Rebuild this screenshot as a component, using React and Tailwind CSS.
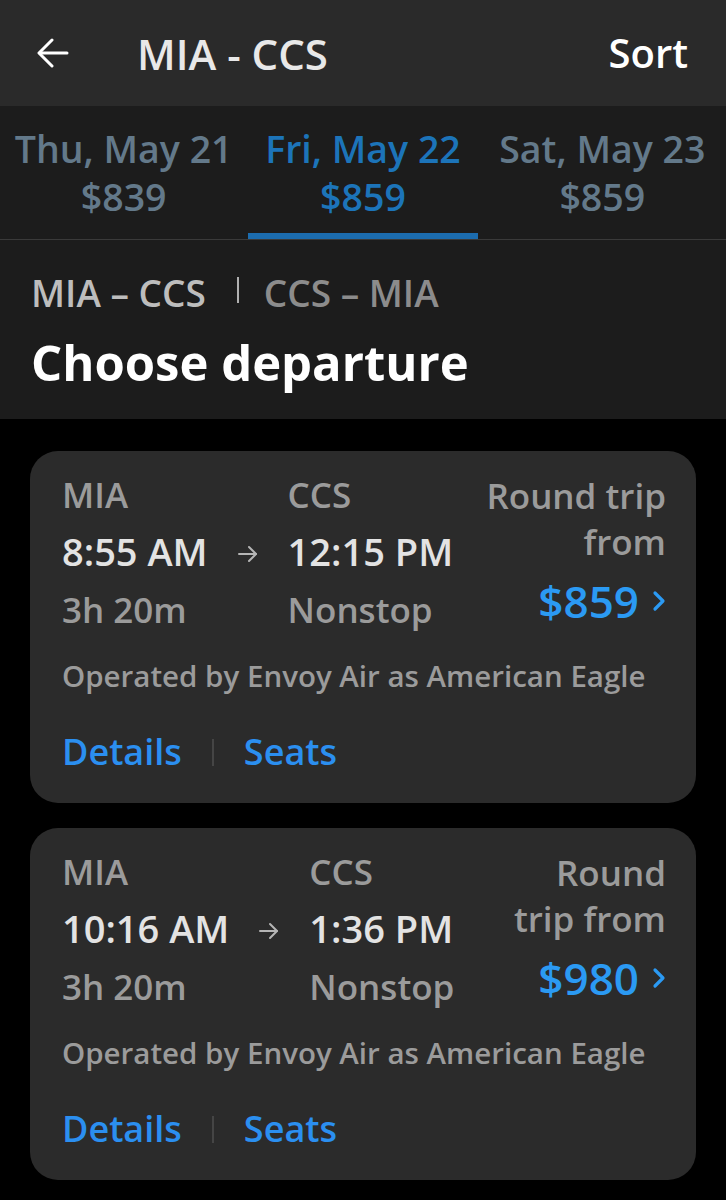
import React from "react"

const font = { fontFamily: '"Open Sans", "Noto Sans", sans-serif' }

const dates = [
  { day: "Thu, May 21", price: "$839" },
  { day: "Fri, May 22", price: "$859", active: true },
  { day: "Sat, May 23", price: "$859" },
]

const flights = [
  {
    from: "MIA",
    to: "CCS",
    dep: "8:55 AM",
    arr: "12:15 PM",
    duration: "3h 20m",
    label: ["Round trip", "from"],
    price: "$859",
  },
  {
    from: "MIA",
    to: "CCS",
    dep: "10:16 AM",
    arr: "1:36 PM",
    duration: "3h 20m",
    label: ["Round", "trip from"],
    price: "$980",
  },
]

function BackArrow() {
  return (
    <svg width="32" height="32" viewBox="0 0 32 32" fill="none" stroke="#ffffff" strokeWidth="3" strokeLinecap="round" strokeLinejoin="round">
      <path d="M30 16H3" />
      <path d="M15 3L2 16l13 13" />
    </svg>
  )
}

function SmallArrow() {
  return (
    <svg width="20" height="18" viewBox="0 0 20 18" fill="none" stroke="#b5b5b5" strokeWidth="2" strokeLinecap="round" strokeLinejoin="round">
      <path d="M1 9h17" />
      <path d="M11 2l7 7-7 7" />
    </svg>
  )
}

function Chevron() {
  return (
    <svg width="15" height="22" viewBox="0 0 15 22" fill="none" stroke="#2b9af3" strokeWidth="3.2" strokeLinecap="round" strokeLinejoin="round">
      <path d="M4 3l8 8-8 8" />
    </svg>
  )
}

function FlightCard({ f }) {
  return (
    <div className="rounded-[28px] bg-[#2b2b2b] pl-[32px] pr-[30px] pt-[22px] pb-[29px]">
      <div className="flex">
        <div className="flex flex-col">
          <span className="text-[35px] leading-[44px] font-semibold text-[#9b9b9b]">{f.from}</span>
          <span className="text-[38px] leading-[68px] font-semibold text-[#e3e3e3]">{f.dep}</span>
          <span className="text-[35px] leading-[50px] font-semibold text-[#9b9b9b]">{f.duration}</span>
        </div>
        <div className="flex flex-col px-[30px]">
          <div className="h-[44px]" />
          <div className="h-[68px] flex items-center pt-[6px]">
            <SmallArrow />
          </div>
        </div>
        <div className="flex flex-col">
          <span className="text-[35px] leading-[44px] font-semibold text-[#9b9b9b]">{f.to}</span>
          <span className="text-[38px] leading-[68px] font-semibold text-[#e3e3e3]">{f.arr}</span>
          <span className="text-[35px] leading-[50px] font-semibold text-[#9b9b9b]">Nonstop</span>
        </div>
        <div className="flex-1 flex flex-col items-end text-right">
          <span className="text-[35px] leading-[46px] font-semibold text-[#9b9b9b] whitespace-nowrap">{f.label[0]}</span>
          <span className="text-[35px] leading-[46px] font-semibold text-[#9b9b9b] whitespace-nowrap">{f.label[1]}</span>
          <div className="flex items-center gap-[12px] h-[72px]">
            <span className="text-[44px] leading-[72px] font-semibold text-[#2b9af3]">{f.price}</span>
            <Chevron />
          </div>
        </div>
      </div>
      <div className="mt-[19px] text-[29.5px] leading-[40px] font-semibold text-[#9b9b9b] whitespace-nowrap">
        Operated by Envoy Air as American Eagle
      </div>
      <div className="mt-[34px] flex items-center h-[44px]">
        <span className="text-[36px] leading-[44px] font-semibold text-[#2b8ff0]">Details</span>
        <div className="mx-[30px] w-[2px] h-[27px] bg-[#454545]" />
        <span className="text-[36px] leading-[44px] font-semibold text-[#2b8ff0]">Seats</span>
      </div>
    </div>
  )
}

export default function App() {
  return (
    <div className="w-[726px] min-h-[1200px] bg-black" style={font}>
      <div className="h-[106px] bg-[#2a2a2a] flex items-center pl-[37px] pr-[38px]">
        <BackArrow />
        <span className="ml-[68px] text-[42px] font-semibold text-[#e8e8e8]">MIA - CCS</span>
        <span className="ml-auto text-[40px] font-semibold text-white">Sort</span>
      </div>

      <div className="bg-[#1c1c1c] border-b border-[#3a3a3a] flex px-[4px]">
        {dates.map((d) => (
          <div key={d.day} className="flex-1 flex flex-col items-center pt-[19px]">
            <span className={"text-[37.5px] leading-[48px] font-semibold whitespace-nowrap " + (d.active ? "text-[#1c74b9]" : "text-[#63798a]")}>
              {d.day}
            </span>
            <span className={"text-[37.5px] leading-[48px] font-semibold " + (d.active ? "text-[#1c74b9]" : "text-[#63798a]")}>
              {d.price}
            </span>
            <div className={"mt-[12px] h-[6px] w-[230px] " + (d.active ? "bg-[#1c6cae]" : "bg-transparent")} />
          </div>
        ))}
      </div>

      <div className="bg-[#1c1c1c] h-[179px] px-[31px] pt-[27px]">
        <div className="flex items-center h-[52px]">
          <span className="text-[37px] font-semibold text-[#bdbdbd]">MIA – CCS</span>
          <div className="ml-[31px] mr-[25px] w-[2px] h-[26px] bg-[#b0b0b0] -mt-[6px]" />
          <span className="text-[37px] font-semibold text-[#8c8c8c]">CCS – MIA</span>
        </div>
        <div className="mt-[15px] text-[49px] leading-[56px] font-bold text-white whitespace-nowrap">Choose departure</div>
      </div>

      <div className="px-[30px] pt-[32px] pb-[20px] flex flex-col gap-[25px]">
        {flights.map((f) => (
          <FlightCard key={f.dep} f={f} />
        ))}
      </div>
    </div>
  )
}
